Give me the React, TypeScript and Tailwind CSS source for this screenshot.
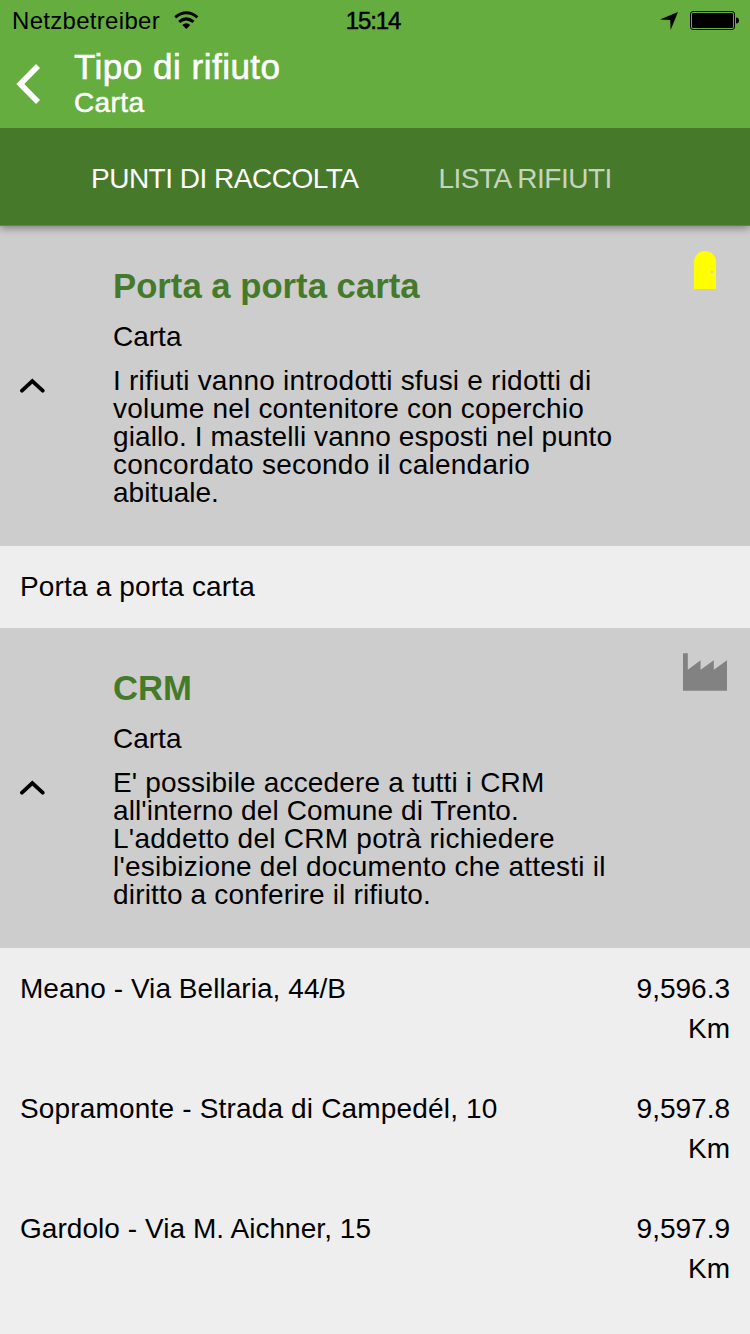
type Line = { text: string; tracking: string };
type Category = { title: string; kind: string; lines: Line[]; icon: 'door' | 'factory' };
type Place = { name: string; distance: string; tracking: string };

const doorToDoor: Category = {
  title: 'Porta a porta carta',
  kind: 'Carta',
  icon: 'door',
  lines: [
    { text: 'I rifiuti vanno introdotti sfusi e ridotti di', tracking: 'tracking-[0.22px]' },
    { text: 'volume nel contenitore con coperchio', tracking: 'tracking-[0.2px]' },
    { text: 'giallo. I mastelli vanno esposti nel punto', tracking: 'tracking-[0.1px]' },
    { text: 'concordato secondo il calendario', tracking: 'tracking-[0.24px]' },
    { text: 'abituale.', tracking: 'tracking-[0px]' },
  ],
};

const crm: Category = {
  title: 'CRM',
  kind: 'Carta',
  icon: 'factory',
  lines: [
    { text: "E' possibile accedere a tutti i CRM", tracking: 'tracking-[0.17px]' },
    { text: "all'interno del Comune di Trento.", tracking: 'tracking-[0.11px]' },
    { text: "L'addetto del CRM potrà richiedere", tracking: 'tracking-[0.25px]' },
    { text: "l'esibizione del documento che attesti il", tracking: 'tracking-[0.23px]' },
    { text: 'diritto a conferire il rifiuto.', tracking: 'tracking-[0.17px]' },
  ],
};

const places: Place[] = [
  { name: 'Meano - Via Bellaria, 44/B', distance: '9,596.3', tracking: 'tracking-[0.05px]' },
  { name: 'Sopramonte - Strada di Campedél, 10', distance: '9,597.8', tracking: 'tracking-[0.17px]' },
  { name: 'Gardolo - Via M. Aichner, 15', distance: '9,597.9', tracking: 'tracking-[0.05px]' },
];

const WifiIcon = () => (
  <svg width="25" height="19" viewBox="0 0 25 19" className="mb-0.5 ml-[14px] block">
    <path d="M1.200 6.300Q12.300 -2.800 23.400 6.300" fill="none" stroke="#000" strokeWidth="3" />
    <path d="M5.100 10.900Q12.300 4.900 19.500 10.900" fill="none" stroke="#000" strokeWidth="3" />
    <path d="M8.300 14Q12.300 10.400 16.300 14L12.300 18Z" fill="#000" />
  </svg>
);

const LocationIcon = () => (
  <svg width="18" height="18" viewBox="0 0 18 18" className="mt-px block">
    <path d="M18 0L10.600 18L10.200 8L0 7.500Z" fill="#000" />
  </svg>
);

const BatteryIcon = () => (
  <svg width="49" height="19" viewBox="0 0 49 19" className="block">
    <rect x="0.500" y="0.500" width="44" height="18" rx="2.500" fill="none" stroke="#000" />
    <rect x="2" y="2" width="41" height="15" rx="1.200" fill="#000" />
    <path d="M46 6.500Q49 6.500 49 9.500T46 12.500Z" fill="#000" />
  </svg>
);

const BackIcon = () => (
  <svg width="24" height="40" viewBox="0 0 24 40" className="block">
    <path d="M20 0L24 4L8.300 20L24 36L20 40L0.300 20Z" fill="#fff" />
  </svg>
);

const ChevronUp = () => (
  <svg width="25" height="16" viewBox="0 0 25 16" className="block">
    <path d="M2 12.700L12.300 3L22.700 12.700" fill="none" stroke="#000" strokeWidth="3.800" strokeLinecap="round" />
  </svg>
);

const DoorIcon = () => (
  <svg width="22" height="38" viewBox="0 0 22 38" className="mr-[34px] block">
    <path d="M0 38V11a11 11 0 0 1 22 0V38Z" fill="#ffff00" />
    <rect x="17" y="20" width="2" height="2" fill="#cdcdcd" />
  </svg>
);

const FactoryIcon = () => (
  <svg width="44" height="38" viewBox="0 0 44 38" className="mr-[23px] block">
    <path d="M0 37.700V0.200H4.800V16.700L17.600 7.300V16.700L30.800 7.300V16.700L44 7.300V37.700Z" fill="#828282" />
  </svg>
);

function CategoryPanel({ category }: { category: Category }) {
  return (
    <section className="flex h-80 shrink-0 bg-[#cdcdcd]">
      <div className="flex w-[113px] items-center pl-5">
        <ChevronUp />
      </div>
      <div className="flex-1 pt-10">
        <h2 className="text-[34.7px] leading-10 font-bold text-[#457a2b]">{category.title}</h2>
        <p className="mt-[11px] text-[28px] leading-10">{category.kind}</p>
        <div className="mt-[10px] text-[28px] leading-7 whitespace-nowrap">
          {category.lines.map((line) => (
            <p key={line.text} className={line.tracking}>{line.text}</p>
          ))}
        </div>
      </div>
      <div className="pt-[25px]">{category.icon === 'door' ? <DoorIcon /> : <FactoryIcon />}</div>
    </section>
  );
}

export default function App() {
  return (
    <main className="flex h-[1334px] w-[750px] flex-col overflow-hidden bg-[#eeeeee] font-['Liberation_Sans',Arial,sans-serif] text-black">
      <header className="relative z-20 h-32 shrink-0 bg-[#65ad3f]">
        <div className="grid h-10 grid-cols-3 items-center pr-[11px] pl-3">
          <div className="flex items-center pt-0.5 text-[24px] tracking-[0.3px]">
            Netzbetreiber
            <WifiIcon />
          </div>
          <div className="pt-0.5 pr-[5px] text-center text-[24px] tracking-[-1.1px] [-webkit-text-stroke:0.5px_black]">15:14</div>
          <div className="flex items-center justify-end gap-3">
            <LocationIcon />
            <BatteryIcon />
          </div>
        </div>
        <div className="flex h-[88px] items-center pl-4">
          <BackIcon />
          <div className="flex flex-col pb-[3px] pl-[34px] text-white">
            <h1 className="text-[35px] leading-10 tracking-[0.5px] [-webkit-text-stroke:0.6px_white]">Tipo di rifiuto</h1>
            <p className="text-[28px] leading-8 tracking-[0.4px] [-webkit-text-stroke:0.5px_white]">Carta</p>
          </div>
        </div>
      </header>
      <nav className="relative z-10 flex h-[98px] shrink-0 items-center gap-[80px] border-b border-[#2fa04a] bg-[#47792b] pt-1 pl-[91px] text-[28px] whitespace-nowrap text-white shadow-[0_2px_8px_rgba(0,0,0,0.4)]">
        <span className="tracking-[-0.5px]">PUNTI DI RACCOLTA</span>
        <span className="tracking-[-0.5px] text-white/70">LISTA RIFIUTI</span>
      </nav>
      <CategoryPanel category={doorToDoor} />
      <div className="flex h-[82px] shrink-0 items-center px-5 text-[28px] tracking-[0.16px]">Porta a porta carta</div>
      <CategoryPanel category={crm} />
      <ul>
        {places.map((place) => (
          <li key={place.name} className="flex h-[120px] justify-between px-5 pt-[21px] text-[28px] leading-10">
            <span className={place.tracking}>{place.name}</span>
            <span className="w-[94px] text-right">
              {place.distance} <br />Km
            </span>
          </li>
        ))}
      </ul>
    </main>
  );
}
